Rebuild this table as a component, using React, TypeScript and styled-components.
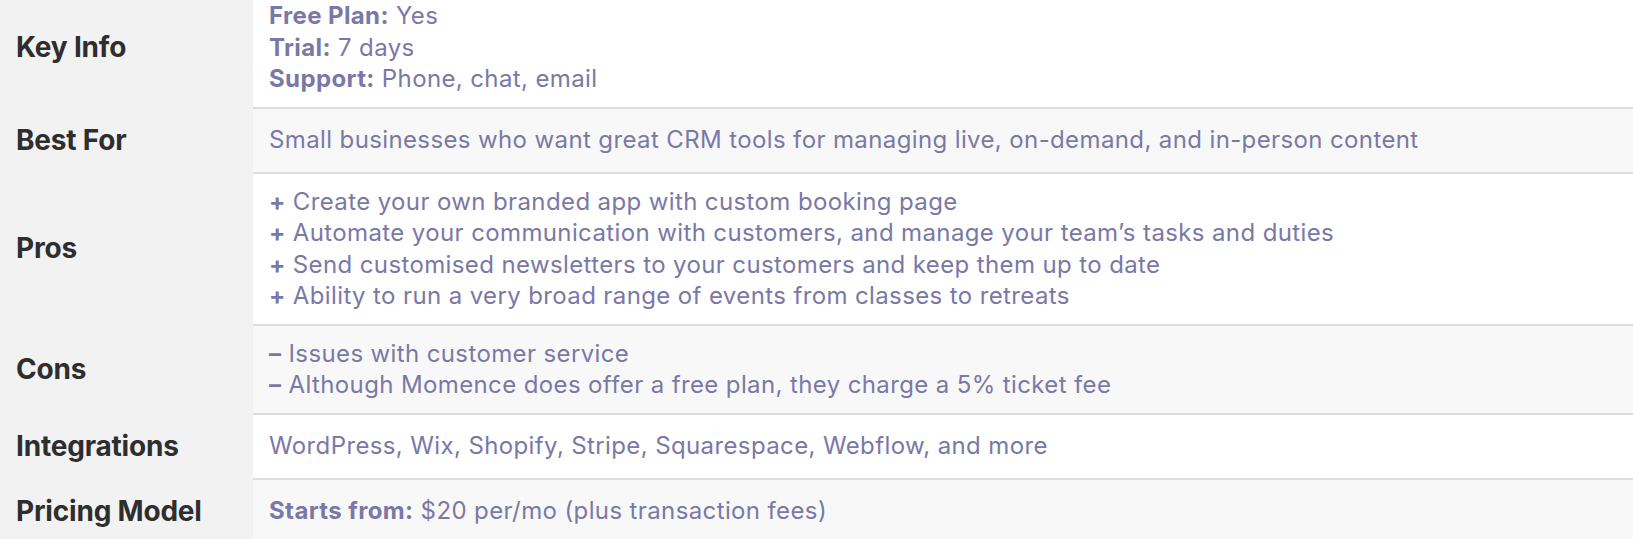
import styled, { createGlobalStyle } from "styled-components";

const GlobalStyle = createGlobalStyle`
  html, body {
    margin: 0;
    padding: 0;
    background: #ffffff;
    overflow: hidden;
  }
`;

type Part = { strong?: string; text: string };

type Row = {
  label: string;
  lines: Part[];
};

const rows: Row[] = [
  {
    label: "Key Info",
    lines: [
      { strong: "Free Plan:", text: " Yes" },
      { strong: "Trial:", text: " 7 days" },
      { strong: "Support:", text: " Phone, chat, email" },
    ],
  },
  {
    label: "Best For",
    lines: [{ text: "Small businesses who want great CRM tools for managing live, on-demand, and in-person content" }],
  },
  {
    label: "Pros",
    lines: [
      { strong: "+", text: " Create your own branded app with custom booking page" },
      { strong: "+", text: " Automate your communication with customers, and manage your team’s tasks and duties" },
      { strong: "+", text: " Send customised newsletters to your customers and keep them up to date" },
      { strong: "+", text: " Ability to run a very broad range of events from classes to retreats" },
    ],
  },
  {
    label: "Cons",
    lines: [
      { strong: "–", text: " Issues with customer service" },
      { strong: "–", text: " Although Momence does offer a free plan, they charge a 5% ticket fee" },
    ],
  },
  {
    label: "Integrations",
    lines: [{ text: "WordPress, Wix, Shopify, Stripe, Squarespace, Webflow, and more" }],
  },
  {
    label: "Pricing Model",
    lines: [{ strong: "Starts from:", text: " $20 per/mo (plus transaction fees)" }],
  },
];

function App() {
  return (
    <>
      <GlobalStyle />
      <Table>
        <tbody>
          {rows.map((row, i) => (
            <tr key={row.label}>
              <LabelCell>{row.label}</LabelCell>
              <ValueCell shaded={i % 2 === 1}>
                {row.lines.map((line, j) => (
                  <Line key={j}>
                    {line.strong && <Strong>{line.strong}</Strong>}
                    {line.text}
                  </Line>
                ))}
              </ValueCell>
            </tr>
          ))}
        </tbody>
      </Table>
    </>
  );
}

const Table = styled.table`
  width: 100%;
  margin-top: -12px;
  border-collapse: collapse;
  font-family: Inter, "Noto Sans", sans-serif;
`;

const LabelCell = styled.th`
  width: 253px;
  box-sizing: border-box;
  padding: 12px 16px;
  background-color: #f2f2f2;
  color: #2e2e2e;
  font-size: 28px;
  font-weight: 700;
  line-height: 41px;
  letter-spacing: -0.2px;
  text-align: left;
  vertical-align: middle;
  white-space: nowrap;
`;

const ValueCell = styled.td<{ shaded: boolean }>`
  padding: 12px 16px;
  background-color: ${({ shaded }) => (shaded ? "#f8f8f8" : "#ffffff")};
  border-bottom: 2px solid #dddddd;
  color: #7a78a6;
  font-size: 24px;
  line-height: 31.5px;
  letter-spacing: 0.38px;
  vertical-align: middle;
`;

const Line = styled.div``;

const Strong = styled.strong`
  font-weight: 700;
`;

export default App;
